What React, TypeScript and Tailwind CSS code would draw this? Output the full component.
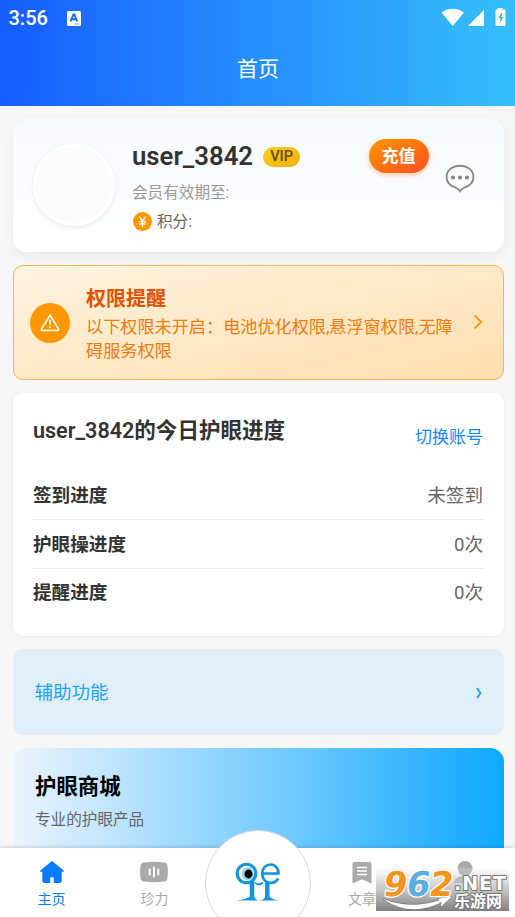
import type { ReactNode } from 'react';

interface Progress {
  label: string;
  value: string;
}

const progressList: Progress[] = [
  { label: '签到进度', value: '未签到' },
  { label: '护眼操进度', value: '0次' },
  { label: '提醒进度', value: '0次' },
];

function StatusBar() {
  return (
    <div className="flex h-[36px] items-center pl-[8.500px] pr-[8.500px]">
      <span className="text-[20px] font-medium leading-none">3:56</span>
      <svg className="ml-[19px]" width="14" height="15" viewBox="0 0 14 15">
        <rect width="14" height="15" rx="1.5" fill="#fff" />
        <path d="M3.6 10.5 6.4 3.5h1l2.8 7M4.8 8.3h4.2" fill="none" stroke="#2069ff" strokeWidth="1.9" />
        <path d="M7.5 13h5" stroke="#2069ff" strokeWidth="1" strokeDasharray="1.2 .8" />
      </svg>
      <svg className="ml-auto" width="66" height="20" viewBox="0 0 66 20">
        <path d="M.5 4.6C7-.5 17-.5 23 4.6L11.700 18z" fill="#fff" />
        <path d="M43 2V18H27z" fill="#fff" />
        <path d="M56.500 0h5v1.500h2q1 0 1 1V17q0 1-1 1h-8q-1 0-1-1V2.500q0-1 1-1h1z" fill="#fff" />
        <path d="m60.500 5-3 5h2.200l-1 5 3.800-6h-2.300l1.300-4z" fill="#2fa8fb" />
      </svg>
    </div>
  );
}

function ProfileCard() {
  return (
    <section className="flex h-[133px] rounded-[14px] bg-linear-to-b from-[#f7f9fb] to-white pl-5 shadow-[0_4px_14px_rgba(0,0,0,0.05)]">
      <div className="mt-[25px] size-[82px] rounded-full border-[3px] border-white bg-[#fcfcfd] shadow-[0_2px_5px_rgba(0,0,0,0.07)]" />
      <div className="ml-[17px] pt-[22px]">
        <div className="flex h-[30px] items-center">
          <span className="text-[25.750px] font-semibold leading-[30px] text-[#333]">user_3842</span>
          <span className="ml-[10px] mt-0.5 flex h-5 w-[37px] items-center justify-center rounded-full bg-linear-to-br from-[#f8d01c] to-[#f3ae08] text-[14.500px] font-semibold text-[#6b5000]">
            VIP
          </span>
        </div>
        <p className="mt-[11px] text-[15.600px] leading-[22px] text-[#999]">会员有效期至:</p>
        <div className="mt-[5px] flex items-center text-[15.600px] leading-[22px] text-[#666]">
          <svg className="ml-px mr-[5px]" width="19" height="19" viewBox="0 0 19 19">
            <circle cx="9.500" cy="9.500" r="9.500" fill="#ff9800" />
            <path d="m6.300 4.500 3.200 4.400 3.200-4.400M9.500 8.900v6M6.200 9.500h6.600M6.200 12h6.600" fill="none" stroke="#fff" strokeWidth="1.300" />
          </svg>
          <span className="pt-[2px]">积分:</span>
        </div>
      </div>
      <button className="ml-auto mt-5 h-[34px] w-[60px] rounded-full bg-linear-to-br/srgb from-[#ff9800] to-[#ff4d22] pt-[2px] text-[17px] font-bold text-white shadow-[0_2px_5px_rgba(255,110,20,0.35)]">
        充值
      </button>
      <svg className="ml-4 mr-[29px] mt-[45px]" width="30" height="30" viewBox="0 0 30 30">
        <path
          d="M15 1.700C7.200 1.700 1.500 6.800 1.500 13c0 5.600 4.200 9.100 9.700 10.800 2 .700 2.800 1.700 3.800 3.400 1-1.700 1.800-2.700 3.800-3.400 5.500-1.700 9.700-5.200 9.700-10.800C28.500 6.800 22.800 1.700 15 1.700z"
          fill="none"
          stroke="#888"
          strokeWidth="1.900"
        />
        <g fill="#888">
          <circle cx="8" cy="13.500" r="2.100" />
          <circle cx="15" cy="13.500" r="2.100" />
          <circle cx="22" cy="13.500" r="2.100" />
        </g>
      </svg>
    </section>
  );
}

function PermissionCard() {
  return (
    <section className="mt-[13px] flex h-[115px] items-center rounded-[10px] border-[1.500px] border-[#f2b45c] bg-linear-to-br/srgb from-[#fff3e0] to-[#ffdfb0] pl-4 pr-5">
      <div className="flex size-10 shrink-0 items-center justify-center rounded-full bg-[#ff9800]">
        <svg width="20" height="19" viewBox="0 0 20 19" fill="none" stroke="#fff" strokeLinejoin="round">
          <path d="M10 2 1.500 16q-.600 1.500 1 1.500h15q1.600 0 1-1.500z" strokeWidth="1.500" />
          <path d="M10 6.500v5.800M10 13.600v1.700" strokeWidth="1.700" />
        </svg>
      </div>
      <div className="ml-4 w-[376px] shrink-0 pt-px">
        <h2 className="pt-[2px] text-[20px] font-bold leading-7 text-[#e65100]">权限提醒</h2>
        <p className="mt-[2px] whitespace-nowrap text-[17.150px] leading-[24px] text-[#ef7c0c]">
          以下权限未开启：电池优化权限,悬浮窗权限,无障
          <br />
          碍服务权限
        </p>
      </div>
      <svg className="mb-[2px] ml-[11px] shrink-0" width="10" height="16" viewBox="0 0 10 16">
        <path d="m1.500 1.500 6.500 6.500-6.500 6.500" fill="none" stroke="#ff9d12" strokeWidth="2" />
      </svg>
    </section>
  );
}

function ProgressCard() {
  return (
    <section className="mt-[13px] h-[243px] rounded-[10px] bg-white px-5 pt-[22px] shadow-[0_1px_4px_rgba(0,0,0,0.05)]">
      <div className="flex h-[56px] justify-between">
        <h2 className="text-[21.550px] font-semibold leading-8 text-[#333]">user_3842的今日护眼进度</h2>
        <button className="mr-[.500px] mt-[10px] h-6 text-[17px] leading-6 text-[#1188ff]">切换账号</button>
      </div>
      {progressList.map(item => (
        <div
          key={item.label}
          className="flex h-[49px] items-center justify-between border-b border-[#ebebeb] pr-[.500px] pt-[4px] text-[18.600px] last:border-b-0 last:pt-px"
        >
          <span className="font-bold text-[#333]">{item.label}</span>
          <span className="text-[#666]">{item.value}</span>
        </div>
      ))}
    </section>
  );
}

function Tab({ label, active, children }: { label?: string; active?: boolean; children: ReactNode }) {
  return (
    <div className={`flex w-[103px] shrink-0 flex-col items-center pt-3 ${active ? 'text-[#077bff]' : 'text-[#aaa]'}`}>
      {children}
      {label && <span className="mt-[5px] text-[14px] leading-5">{label}</span>}
    </div>
  );
}

function TabBar() {
  return (
    <nav className="relative flex h-[69px] shrink-0 bg-white shadow-[0_-1px_4px_rgba(0,0,0,0.15)]">
      <Tab label="主页" active>
        <svg className="ml-px" width="26" height="24" viewBox="0 0 26 24" fill="currentColor">
          <path d="M13 1 1.300 10.600q-.700 1.200.500 1.200h1.500V21q0 2 2 2h6v-4.700q0-1 1-1h1.400q1 0 1 1V23h6q2 0 2-2v-9.200h1.500q1.200 0 .500-1.200z" />
        </svg>
      </Tab>
      <Tab label="珍力">
        <svg className="mr-px" width="28" height="24" viewBox="0 0 28 24">
          <path d="M4 2.500q10-1.300 20 0 3 .300 3.400 3 .900 6.500 0 13-.400 2.700-3.400 3-10 1.300-20 0-3-.300-3.400-3-.900-6.500 0-13Q1 2.800 4 2.500z" fill="currentColor" />
          <path d="M9.700 9.500v5M14 7.500v9M18.300 9.500v5" stroke="#fff" strokeWidth="2" strokeLinecap="round" />
        </svg>
      </Tab>
      <div className="w-[104.500px] shrink-0" />
      <Tab label="文章">
        <svg width="20" height="24" viewBox="0 0 20 24">
          <path d="M2.500 2h15q2 0 2 2v19.500l-9.500-4.200-9.500 4.200V4q0-2 2-2z" fill="currentColor" />
          <path d="M5 7.500h10M5 11h10M5 14.500h10" stroke="#fff" strokeWidth="1.400" />
        </svg>
      </Tab>
      <Tab>
        <svg width="24" height="24" viewBox="0 0 24 24" fill="currentColor">
          <circle cx="12" cy="8.500" r="7.500" />
          <path d="M1 23q1-7 11-7t11 7z" />
        </svg>
      </Tab>
      <div className="absolute left-[205px] top-[-18px] h-[87px] w-[106px] overflow-hidden">
        <div className="size-[106px] rounded-full border-[1.500px] border-[#d7d9dc] bg-white pl-[29px] pt-[31px]">
          <svg width="46" height="41" viewBox="0 0 46 41">
            <g fill="none" stroke="#1296db">
              <ellipse cx="11.500" cy="11.500" rx="9.300" ry="9.300" strokeWidth="3" />
              <path d="M27.500 11.500h16c0-5-3.200-9-7.900-9s-8.400 3.900-8.400 9.300 3.500 9 8.500 9c3.500 0 6-1.500 7.500-4.300" strokeWidth="2.700" />
              <path d="M20 20.500q3.500 4 8 0" strokeWidth="1.800" />
              <path d="M17 19v18M32.300 20v17" strokeWidth="4.500" />
            </g>
            <path d="M2.500 38.500q7-.700 12-3.500h5q.500 2.500 3.500 3.500zM25 38.500q4-1 5-3.500h5q3 2.500 9 3.500z" fill="#1296db" />
            <ellipse cx="12.700" cy="11.700" rx="6.300" ry="6.800" fill="#a7d3e4" />
            <ellipse cx="13.500" cy="12" rx="4" ry="4.400" fill="#000" />
          </svg>
        </div>
      </div>
    </nav>
  );
}

function SiteBadge() {
  return (
    <div className="absolute bottom-[6px] right-[6px] h-[43px] w-[133px] bg-linear-to-b from-white/20 via-[#b9b9b9]/80 to-[#808080]">
      <svg className="overflow-visible" width="133" height="43" viewBox="0 0 133 43" strokeLinejoin="round" paintOrder="stroke">
        <path d="M7 31q28 19 59 3l-1.500 5L76 28.500 61 31l3 1q-28 10-57-1z" fill="#fff" stroke="#777" strokeWidth="1" />
        <g
          transform="translate(6 27.500) skewX(-9)"
          fontFamily="DejaVu Sans, sans-serif"
          fontWeight="700"
          fontSize="34"
          stroke="#fff"
          strokeWidth="2.500"
        >
          <text x="0" fill="#f7941d">9</text>
          <text x="23" fill="#5aaee0">6</text>
          <text x="46" fill="#f7941d">2</text>
        </g>
        <g fill="#fff" stroke="#777" strokeWidth="2" fontWeight="700">
          <text x="78" y="22" fontFamily="DejaVu Sans, sans-serif" fontSize="19" letterSpacing="1">.NET</text>
          <text x="78" y="39" fontFamily="Noto Sans CJK SC, sans-serif" fontSize="16">乐游网</text>
        </g>
      </svg>
    </div>
  );
}

export default function App() {
  return (
    <div className="relative flex h-[917px] w-[515px] flex-col overflow-hidden bg-[#f7f7f7] font-['Roboto','Noto_Sans_CJK_SC',sans-serif]">
      <header className="h-[106px] shrink-0 bg-linear-to-r/srgb from-[#165dff] to-[#36bffa] text-white">
        <StatusBar />
        <h1 className="mt-[17px] pl-px text-center text-[21px] leading-8">首页</h1>
      </header>
      <main className="min-h-0 flex-1 overflow-hidden pl-[13px] pr-[11.500px] pt-[13px]">
        <ProfileCard />
        <PermissionCard />
        <ProgressCard />
        <section className="mt-[13px] flex h-[86px] items-center justify-between rounded-[10px] bg-[#e1effb] pl-[21.500px] pr-[21px] pt-[2px] text-[18.500px] text-[#1ba5f5]">
          <span className="pt-px">辅助功能</span>
          <svg width="8" height="12" viewBox="0 0 8 12">
            <path d="m2 1 3.500 5L2 11" fill="none" stroke="currentColor" strokeWidth="1.900" />
          </svg>
        </section>
        <section className="mt-[13px] h-[140px] rounded-[14px] bg-linear-to-r/srgb from-[#ecf4fd] via-[#7dceff] to-[#0fa8ff] pl-[22px] pt-[23px]">
          <h2 className="text-[21.400px] font-bold leading-8 text-black">护眼商城</h2>
          <p className="mt-[6px] text-[15.600px] leading-[22px] text-[#666]">专业的护眼产品</p>
        </section>
      </main>
      <TabBar />
      <SiteBadge />
    </div>
  );
}
